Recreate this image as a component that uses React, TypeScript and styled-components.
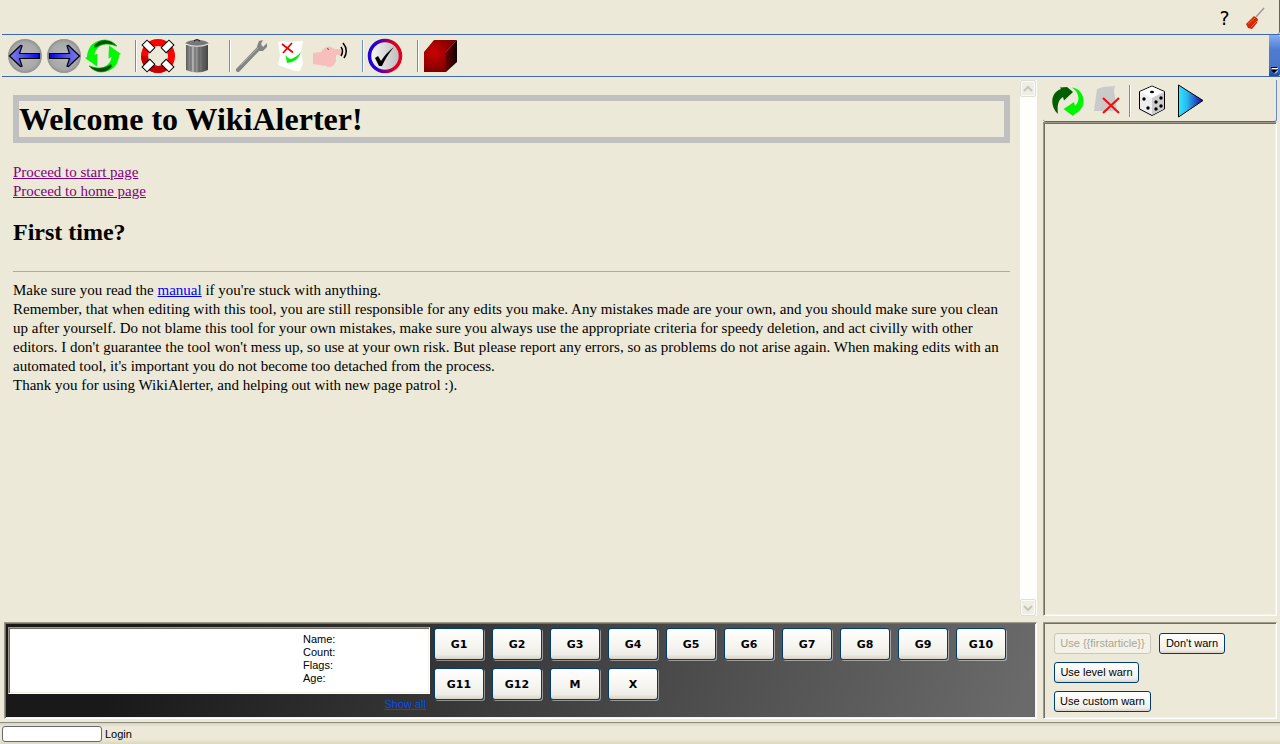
import React from "react";
import styled, { createGlobalStyle, css } from "styled-components";

const face = "#ece9d8";
const ui = '"Liberation Sans", Arial, sans-serif';

const Global = createGlobalStyle`
  * { box-sizing: border-box; }
  body { margin: 0; background: ${face}; color: #000; font: 11px/13px ${ui}; }
  button { font: inherit; color: inherit; }
`;

const Shell = styled.div`
  min-height: 100vh;
  display: flex;
  flex-direction: column;
`;

const MenuBar = styled.header`
  height: 34px;
  flex: none;
  display: flex;
  justify-content: flex-end;
  align-items: center;
  gap: 7px;
  padding: 2px 10px 0 0;
  border-right: 1px solid #3f68ae;
  border-radius: 0 0 3px 0;
`;

const MenuButton = styled.button`
  width: 25px;
  height: 26px;
  padding: 0;
  border: 0;
  background: none;
  font: 19px/26px "DejaVu Sans", sans-serif;
  svg { display: block; }
`;

const ToolStrip = styled.nav`
  height: 43px;
  flex: none;
  display: flex;
  justify-content: space-between;
  margin-left: 2px;
  border: solid #3f68a6;
  border-width: 1px 0;
`;

const Tools = styled.div`
  display: flex;
  align-items: center;
  gap: 3px;
  padding-left: 5px;
`;

const ToolButton = styled.button`
  width: 36px;
  height: 36px;
  padding: 0;
  border: 0;
  background: none;
  svg { display: block; }
`;

const Divider = styled.span<{ $wide?: boolean }>`
  width: ${(p) => (p.$wide ? 13 : 3)}px;
  height: 32px;
  display: flex;
  justify-content: flex-end;
  &::before {
    content: "";
    width: 1px;
    background: #6a8ccb;
    border-right: 1px solid #fff;
    background-clip: padding-box;
  }
`;

const Overflow = styled.button`
  width: 11px;
  padding: 0 0 2px;
  border: 0;
  border-radius: 0 2px 2px 0;
  background: linear-gradient(#84adf4, #4f7dd2 35%, #4a76c8 75%, #1c4aa0);
  display: flex;
  align-items: flex-end;
  justify-content: center;
`;

const Workspace = styled.main`
  flex: 1;
  display: grid;
  grid-template-columns: minmax(0, 1fr) 234px;
  grid-template-rows: 1fr 97px;
  gap: 6px;
  padding: 3px 3px 3px 4px;
`;

const Browser = styled.section`
  display: flex;
  min-width: 0;
`;

const Page = styled.article`
  flex: 1;
  min-width: 0;
  padding: 15px 10px 0 9px;
  font: 15px/19px "Liberation Serif", "Times New Roman", serif;
  p { margin: 0; }
  hr { margin: 0 0 9px; border: 0; border-top: 1px solid #aaa; }
`;

const Title = styled.h1`
  margin: 0 0 20px;
  border: 6px solid silver;
  font-size: 32px;
  line-height: 36px;
`;

const Heading = styled.h2`
  margin: 17px 0 25px;
  font-size: 24px;
  line-height: 28px;
`;

const PageLink = styled.a<{ $visited?: boolean }>`
  color: ${(p) => (p.$visited ? "#800080" : "#0000ff")};
  text-decoration: underline;
`;

const ScrollTrack = styled.div`
  width: 17px;
  display: flex;
  flex-direction: column;
  justify-content: space-between;
  background: #fefefb;
`;

const ScrollButton = styled.button`
  width: 16px;
  height: 17px;
  padding: 0;
  display: grid;
  place-items: center;
  border: 1px solid #e0dfd2;
  border-radius: 2px;
  background: #efeee5;
  box-shadow: inset 0 0 0 1px #fbfbf6;
`;

const Sidebar = styled.aside`
  display: flex;
  flex-direction: column;
`;

const SideTools = styled(Tools)`
  height: 42px;
  padding-left: 7px;
  border-right: 1px solid #6a8ccb;
  border-bottom: 1px solid #3f68a6;
  border-radius: 0 0 3px 3px;
`;

const sunken = css`
  border: 1px solid;
  border-color: #9d9a8b #fff #fff #9d9a8b;
  box-shadow: inset 1px 1px #716f64, inset -1px -1px #f4f2e8;
`;

const PageList = styled.div`
  flex: 1;
  ${sunken}
`;

const Details = styled.section`
  ${sunken}
  display: flex;
  align-items: flex-start;
  padding: 4px 3px;
  gap: 4px;
  background: linear-gradient(110deg, #191919 12%, #6a6a6a 98%);
`;

const UserColumn = styled.div`
  width: 422px;
  flex: none;
  text-align: right;
`;

const UserCard = styled.div`
  ${sunken}
  height: 67px;
  padding: 5px 0 0 294px;
  margin-bottom: 4px;
  background: #fff;
  text-align: left;
`;

const ShowAll = styled.a`
  padding-right: 4px;
  color: #0050e8;
  text-decoration: underline;
`;

const Criteria = styled.div`
  flex: 1;
  display: flex;
  flex-wrap: wrap;
  gap: 8px;
  padding-top: 1px;
`;

const XpButton = styled.button`
  border: 1px solid #003c74;
  border-radius: 3px;
  background: linear-gradient(#fff, #f5f4ef 60%, #eeede5 85%, #d8d2c6);
  padding: 0;
  &:disabled {
    color: #a9a697;
    background: #f4f2e7;
    border-color: #c9c7ba;
  }
`;

const CriterionButton = styled(XpButton)`
  width: 50px;
  height: 32px;
  box-shadow: 1px 1px rgba(255, 255, 255, 0.45);
  font: bold 11px/13px "DejaVu Sans", Verdana, sans-serif;
`;

const Warnings = styled.section`
  ${sunken}
  display: flex;
  flex-wrap: wrap;
  align-content: flex-start;
  gap: 8px;
  padding: 10px 44px 0 10px;
`;

const WarnButton = styled(XpButton)<{ $width: number }>`
  width: ${(p) => p.$width}px;
  height: 21px;
`;

const StatusBar = styled.footer`
  height: 22px;
  flex: none;
  display: flex;
  align-items: center;
  gap: 3px;
  padding: 1px 0 0 2px;
  border-top: 1px solid #8f8d80;
  background: linear-gradient(#d6d3c2, #ece9d8 4px, #ece9d8 16px, #dcd9bd);
`;

const StatusField = styled.input`
  width: 100px;
  height: 16px;
  padding: 0 3px;
  border: 1px solid #686868;
  border-radius: 3px;
  background: #fff;
  font: inherit;
`;

const Svg = ({ children, w = 36, h = 36 }: { children: React.ReactNode; w?: number; h?: number }) => (
  <svg width={w} height={h} viewBox={`0 0 ${w} ${h}`} aria-hidden="true">{children}</svg>
);

const Arrow = ({ id, flip }: { id: string; flip?: boolean }) => (
  <Svg>
    <defs>
      <radialGradient id={id + "c"}><stop stopColor="#b8b8b8" /><stop offset=".8" stopColor="#a8a8a8" /><stop offset="1" stopColor="#909090" /></radialGradient>
      <linearGradient id={id + "a"}><stop stopColor="#8080e8" /><stop offset=".45" stopColor="#5050e8" /><stop offset="1" stopColor="#0000f0" /></linearGradient>
    </defs>
    <circle cx="18" cy="18" r="17" fill={`url(#${id}c)`} />
    <path transform={flip ? "matrix(-1 0 0 1 36 0)" : undefined} d="M2.5 18 13.5 7.5 15 8 12.5 15.5H32.5V20.5H12.5L15 28 13.5 28.5Z" fill={`url(#${id}a)`} stroke="#000" strokeWidth="1.2" />
  </Svg>
);

const Recycle = () => (
  <Svg>
    {[0, 180].map((turn) => (
      <g key={turn} transform={`rotate(${turn} 18 18)`}>
        <path d="M32 9C25 0 11 0 5 9C3 12 2 16 2 19L0 20 12 28.500 12.500 15.500 9.500 17C10 11 15 7 21 6Q27 6 32 9Z" fill="#00f800" />
        <path d="M9 7.500C15 0 25 0 32 8C24 5 17 5 10 10Z" fill="#064a06" stroke="#00c800" strokeWidth=".6" />
      </g>
    ))}
  </Svg>
);

const Lifebuoy = () => (
  <Svg>
    <circle cx="18" cy="18" r="13.500" fill="none" stroke="#f00" strokeWidth="7" />
    <path d="M4.500 18A13.500 13.500 0 0 0 27 28" fill="none" stroke="#c40000" strokeWidth="7" />
    {[45, 135, 225, 315].map((a) => (
      <rect key={a} x="14.500" y="-1" width="7" height="11" fill="#fff" stroke="#000" transform={`rotate(${a} 18 18)`} />
    ))}
  </Svg>
);

const Trash = () => (
  <Svg>
    <defs><linearGradient id="bin"><stop stopColor="#5a5a5a" /><stop offset=".3" stopColor="#b0b0b0" /><stop offset=".6" stopColor="#7a7a7a" /><stop offset="1" stopColor="#444" /></linearGradient></defs>
    <path d="M7 7H29V32Q18 37 7 32Z" fill="url(#bin)" />
    <path d="M12 9V33M16 9V34M20 9V34M24 9V33" stroke="#555" strokeWidth=".8" />
    <ellipse cx="18" cy="5.500" rx="11.500" ry="3.500" fill="#777" />
    <path d="M6.500 6Q18 10.500 29.500 6" fill="none" stroke="#eee" strokeWidth="1.200" />
    <path d="M15 3Q18 0 21 3" fill="none" stroke="#222" strokeWidth="1.200" />
  </Svg>
);

const Wrench = () => (
  <Svg>
    <path d="M4 32 26 9" stroke="#848484" strokeWidth="4" strokeLinecap="round" />
    <path d="M23 8 25 3 29 2 27 6 29 9 33 5 33 9 29 13 25 13Z" fill="#848484" />
    <path d="M7 27 24 10" stroke="#aaa" />
  </Svg>
);

const PageCheck = () => (
  <Svg>
    <path d="M5 4 10 3 16 4 30 3 28 14 30 25 27 33 22 33 13 30 5 27 7 17Z" fill="#fff" />
    <path d="M9 6 20 14.500M19 5 10 15" stroke="#f00000" strokeWidth="1.800" />
    <path d="M12.500 17 15 20 18 21Q24 19 28 14Q25 24 14 25Z" fill="#00f000" />
  </Svg>
);

const Hand = () => (
  <Svg>
    <path d="M1 15 9 14Q14 7 19 9L23 11H28L30 14 28 17H24V23L22 27Q18 31 14 28L1 26Z" fill="#f6bfbc" />
    <path d="M15 10.500 17 11.500" stroke="#644" />
    <path d="M29 9Q32 13 29 18M31 5Q37 12 32 20" fill="none" stroke="#000" strokeWidth="1.500" />
  </Svg>
);

const CheckRing = () => (
  <Svg>
    <defs>
      <linearGradient id="ring"><stop offset=".2" stopColor="#2200d8" /><stop offset=".8" stopColor="#e00020" /></linearGradient>
      <linearGradient id="dial"><stop stopColor="#f8f8f8" /><stop offset="1" stopColor="#bbb" /></linearGradient>
    </defs>
    <circle cx="18" cy="18" r="15.500" fill="url(#dial)" stroke="url(#ring)" strokeWidth="3.500" />
    <path d="M8 20 11 18 14 23Q19 15 27 9Q20 17 15 28L12 28Z" fill="#000" />
  </Svg>
);

const Cube = () => (
  <Svg>
    <defs>
      <radialGradient id="cubef" cx=".3" cy=".4" r=".8"><stop stopColor="#cc0000" /><stop offset="1" stopColor="#600" /></radialGradient>
      <linearGradient id="cubes"><stop stopColor="#600" /><stop offset="1" stopColor="#100" /></linearGradient>
    </defs>
    <path d="M2 14 12 2H35L24 14V34H2Z" fill="url(#cubef)" />
    <path d="M24 14 35 2V24L24 34Z" fill="url(#cubes)" />
  </Svg>
);

const SideRefresh = () => (
  <Svg>
    <path d="M8 31C-1 23 1 9 11 6L10 4.500 17 4 23 9 14 17.500 13 14C8 17 7 23 8 31Z" fill="#006000" />
    <path d="M22 4.500C34 6 38 22 28 29L25 31 23 33 13.500 26 24 19 25 23C30 18 30 10 22 4.500Z" fill="#00f400" />
  </Svg>
);

const ClearPage = () => (
  <Svg>
    <path d="M8 6 14 4 26 3 25 8 28 28H5Z" fill="#cacaca" />
    <path d="M14 15 30 30M30 15 14 30" stroke="#f01010" strokeWidth="2.200" />
  </Svg>
);

const Dice = () => (
  <Svg>
    <path d="M18 3 30.500 8.500V26L18 32.500 5.500 26V8.500Z" fill="#eee" stroke="#000" />
    <path d="M18 3.500 30 9 18 15 6 9Z" fill="#fff" />
    <path d="M18 15 30 9V26L18 32Z" fill="#ccc" />
    <g><ellipse cx="18" cy="9" rx="2" ry="1.300" /><circle cx="10" cy="16" r="1.700" /><circle cx="14" cy="25" r="1.700" /><circle cx="22" cy="19" r="1.700" /><circle cx="27" cy="15" r="1.700" /><circle cx="22" cy="26" r="1.700" /><circle cx="27" cy="23" r="1.700" /></g>
  </Svg>
);

const Play = () => (
  <Svg>
    <defs><linearGradient id="play"><stop stopColor="#30e8ff" /><stop offset=".35" stopColor="#28b8f0" /><stop offset="1" stopColor="#2000a0" /></linearGradient></defs>
    <path d="M5.500 2 30 17.500 5.500 34Z" fill="url(#play)" stroke="#000" />
  </Svg>
);

const Screwdriver = () => (
  <Svg w={25} h={26}>
    <path d="M12 12 20 3" stroke="#999" strokeWidth="1.500" />
    <path d="M2 19 10 11 14 14 13 18 8 24 4 23Z" fill="#d02808" />
    <path d="M4 19 11 13M7 22 13 16" stroke="#f07010" />
  </Svg>
);

const Chevron = ({ up }: { up?: boolean }) => (
  <Svg w={10} h={8}><path d={up ? "M1 6 5 2 9 6" : "M1 2 5 6 9 2"} fill="none" stroke="#c8c6b8" strokeWidth="2" /></Svg>
);

const Tool = ({ label, children }: { label: string; children: React.ReactNode }) => (
  <ToolButton type="button" aria-label={label}>{children}</ToolButton>
);

const criteria = ["G1", "G2", "G3", "G4", "G5", "G6", "G7", "G8", "G9", "G10", "G11", "G12", "M", "X"];

export default function App() {
  return (
    <Shell>
      <Global />
      <MenuBar>
        <MenuButton type="button">?</MenuButton>
        <MenuButton type="button" aria-label="Settings"><Screwdriver /></MenuButton>
      </MenuBar>
      <ToolStrip>
        <Tools>
          <Tool label="Back"><Arrow id="back" /></Tool>
          <Tool label="Forward"><Arrow id="fwd" flip /></Tool>
          <Tool label="Refresh"><Recycle /></Tool>
          <Divider $wide />
          <Tool label="Help"><Lifebuoy /></Tool>
          <Tool label="Delete"><Trash /></Tool>
          <Divider $wide />
          <Tool label="Tools"><Wrench /></Tool>
          <Tool label="Review"><PageCheck /></Tool>
          <Tool label="Notify"><Hand /></Tool>
          <Divider $wide />
          <Tool label="Patrol"><CheckRing /></Tool>
          <Divider $wide />
          <Tool label="Block"><Cube /></Tool>
        </Tools>
        <Overflow type="button" aria-label="More tools">
          <Svg w={7} h={8}><path d="M0 1.500H6" stroke="#000" /><path d="M1 2.500H7" stroke="#fff" /><path d="M0 4H6L3 7Z" /><path d="M4 7.500 7 4.500" stroke="#fff" /></Svg>
        </Overflow>
      </ToolStrip>
      <Workspace>
        <Browser>
          <Page>
            <Title>Welcome to WikiAlerter!</Title>
            <p>
              <PageLink $visited href="#start">Proceed to start page</PageLink><br />
              <PageLink $visited href="#home">Proceed to home page</PageLink>
            </p>
            <Heading>First time?</Heading>
            <hr />
            <p>Make sure you read the <PageLink href="#manual">manual</PageLink> if you're stuck with anything.</p>
            <p>Remember, that when editing with this tool, you are still responsible for any edits you make. Any mistakes made are your own, and you should make sure you clean up after yourself. Do not blame this tool for your own mistakes, make sure you always use the appropriate criteria for speedy deletion, and act civilly with other editors. I don't guarantee the tool won't mess up, so use at your own risk. But please report any errors, so as problems do not arise again. When making edits with an automated tool, it's important you do not become too detached from the process.</p>
            <p>Thank you for using WikiAlerter, and helping out with new page patrol :).</p>
          </Page>
          <ScrollTrack>
            <ScrollButton type="button" aria-label="Scroll up"><Chevron up /></ScrollButton>
            <ScrollButton type="button" aria-label="Scroll down"><Chevron /></ScrollButton>
          </ScrollTrack>
        </Browser>
        <Sidebar>
          <SideTools>
            <Tool label="Refresh list"><SideRefresh /></Tool>
            <Tool label="Clear list"><ClearPage /></Tool>
            <Divider />
            <Tool label="Random page"><Dice /></Tool>
            <Tool label="Next page"><Play /></Tool>
          </SideTools>
          <PageList />
        </Sidebar>
        <Details>
          <UserColumn>
            <UserCard>
              <div>Name:</div>
              <div>Count:</div>
              <div>Flags:</div>
              <div>Age:</div>
            </UserCard>
            <ShowAll href="#all">Show all</ShowAll>
          </UserColumn>
          <Criteria>
            {criteria.map((c) => <CriterionButton type="button" key={c}>{c}</CriterionButton>)}
          </Criteria>
        </Details>
        <Warnings>
          <WarnButton type="button" $width={97} disabled>{"Use {{firstarticle}}"}</WarnButton>
          <WarnButton type="button" $width={66}>Don't warn</WarnButton>
          <WarnButton type="button" $width={85}>Use level warn</WarnButton>
          <WarnButton type="button" $width={97}>Use custom warn</WarnButton>
        </Warnings>
      </Workspace>
      <StatusBar>
        <StatusField id="status" />
        <label htmlFor="status">Login</label>
      </StatusBar>
    </Shell>
  );
}
